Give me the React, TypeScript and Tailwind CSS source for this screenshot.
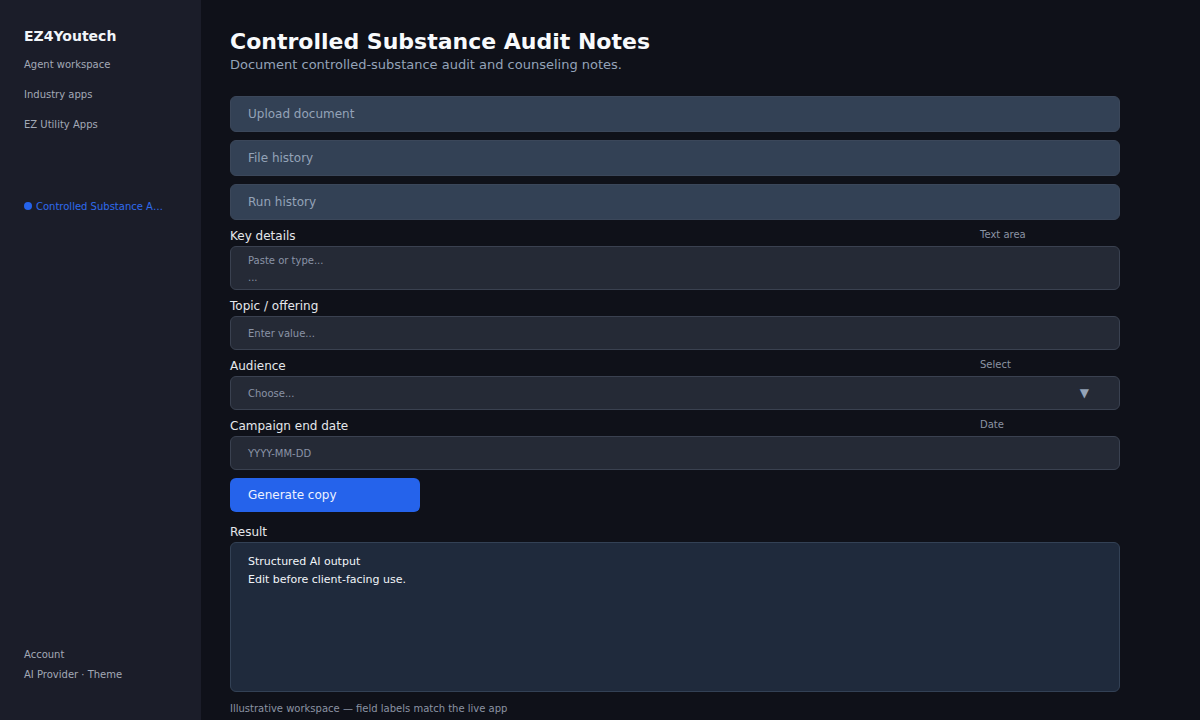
import React from "react";

const font = { fontFamily: '"DejaVu Sans", "Liberation Sans", sans-serif' };

function FieldLabel({ label, hint }: { label: string; hint?: string }) {
  return (
    <div className="mt-[7px] mb-[1px] grid h-[18px] grid-cols-[750px_1fr] items-center">
      <span className="text-[12px] text-[#e5e7eb]">{label}</span>
      {hint ? <span className="text-[10px] leading-[14px] -mt-[2px] text-[#8b93a3]">{hint}</span> : <span />}
    </div>
  );
}

export default function App() {
  const panels = ["Upload document", "File history", "Run history"];
  const navItems = ["Agent workspace", "Industry apps", "EZ Utility Apps"];

  return (
    <div className="flex h-screen w-full overflow-hidden bg-[#0f1119]" style={font}>
      {/* sidebar */}
      <aside className="flex w-[201px] shrink-0 flex-col bg-[#1b1d29] px-6 pt-[26px] pb-[36px]">
        <div className="h-[20px] text-[14px] leading-[20px] font-bold text-[#f1f5f9]">EZ4Youtech</div>
        <nav className="mt-[3px] flex flex-col">
          {navItems.map((n) => (
            <div key={n} className="flex h-[30px] items-center text-[10px] text-[#a3a9b6]">
              {n}
            </div>
          ))}
          <div className="mt-[52px] flex h-[30px] items-center gap-[4px] text-[10px] text-[#2f6bed]">
            <span className="h-[8px] w-[8px] rounded-full bg-[#2563eb]" />
            <span>Controlled Substance A…</span>
          </div>
        </nav>
        <div className="mt-auto flex flex-col text-[10px] text-[#a3a9b6]">
          <div className="flex h-[20px] items-center">Account</div>
          <div className="flex h-[20px] items-center">AI Provider · Theme</div>
        </div>
      </aside>

      {/* main */}
      <main className="flex-1 pl-[29px] pt-[29px]">
        <div className="w-[890px]">
          <h1 className="text-[22px] leading-[26px] font-bold text-[#f8fafc]">Controlled Substance Audit Notes</h1>
          <p className="mt-[2px] text-[13px] leading-[16px] text-[#94a3b8]">
            Document controlled-substance audit and counseling notes.
          </p>

          <div className="mt-[23px] flex flex-col gap-[8px]">
            {panels.map((p) => (
              <div
                key={p}
                className="flex h-[36px] items-center rounded-md border border-[#3b475a] bg-[#334155] px-[17px] text-[12px] text-[#94a3b8]"
              >
                {p}
              </div>
            ))}
          </div>

          <FieldLabel label="Key details" hint="Text area" />
          <div className="h-[44px] rounded-md border border-[#3a4150] bg-[#252a36] px-[17px] pt-[5px] text-[10px] leading-[17px] text-[#8a93a6]">
            <div>Paste or type...</div>
            <div>...</div>
          </div>

          <FieldLabel label="Topic / offering" />
          <div className="flex h-[34px] items-center rounded-md border border-[#3a4150] bg-[#252a36] px-[17px] text-[10px] text-[#8a93a6]">
            Enter value...
          </div>

          <FieldLabel label="Audience" hint="Select" />
          <div className="flex h-[34px] items-center justify-between rounded-md border border-[#3a4150] bg-[#252a36] pl-[17px] pr-[30px] text-[10px] text-[#8a93a6]">
            <span>Choose...</span>
            <span className="text-[12px] text-[#94a3b8]">▼</span>
          </div>

          <FieldLabel label="Campaign end date" hint="Date" />
          <div className="flex h-[34px] items-center rounded-md border border-[#3a4150] bg-[#252a36] px-[17px] text-[10px] text-[#8a93a6]">
            YYYY-MM-DD
          </div>

          <button className="mt-[8px] flex h-[34px] w-[190px] items-center rounded-md bg-[#2563eb] pl-[18px] text-[12px] text-[#eef2ff]">
            Generate copy
          </button>

          <div className="mt-[11px] mb-[1px] flex h-[18px] items-center text-[12px] text-[#e5e7eb]">Result</div>
          <div className="h-[150px] rounded-md border border-[#334155] bg-[#1f2a3c] px-[17px] pt-[10px] text-[11px] leading-[18px] text-[#f1f5f9]">
            <div>Structured AI output</div>
            <div>Edit before client-facing use.</div>
          </div>

          <div className="mt-[9px] h-[16px] text-[10px] leading-[16px] text-[#8b93a3]">
            Illustrative workspace — field labels match the live app
          </div>
        </div>
      </main>
    </div>
  );
}
